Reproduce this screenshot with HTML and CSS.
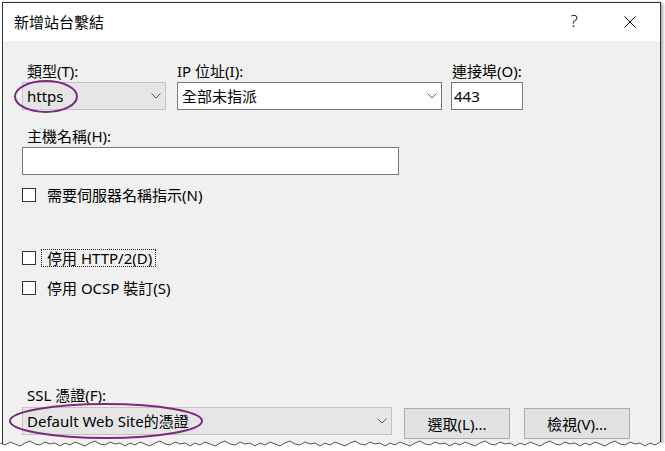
FILE: index.html
```html
<!DOCTYPE html>
<html lang="zh-Hant">
<head>
<meta charset="utf-8">
<title>新增站台繫結</title>
<link rel="stylesheet" href="styles.css">
</head>
<body>
<div class="dialog">
  <div class="titlebar">
    <span class="title">新增站台繫結</span>
    <span class="help">?</span>
    <span class="close">
      <svg width="12" height="12" viewBox="0 0 12 12"><path d="M0.5 0.5 L11.5 11.5 M11.5 0.5 L0.5 11.5" stroke="#000" stroke-width="1" fill="none"/></svg>
    </span>
  </div>
  <div class="content">
    <div class="top-row">
      <div class="group g-type">
        <div class="label indent">類型(T):</div>
        <div class="combo grey"><span class="val">https</span><svg class="chev" width="10" height="6" viewBox="0 0 10 6"><polyline points="0.5,0.5 5,5 9.5,0.5" fill="none" stroke="#606060" stroke-width="1"/></svg></div>
      </div>
      <div class="group g-ip">
        <div class="label">IP 位址(I):</div>
        <div class="combo"><span class="val">全部未指派</span><svg class="chev" width="10" height="6" viewBox="0 0 10 6"><polyline points="0.5,0.5 5,5 9.5,0.5" fill="none" stroke="#606060" stroke-width="1"/></svg></div>
      </div>
      <div class="group g-port">
        <div class="label port-label">連接埠(O):</div>
        <div class="input port">443</div>
      </div>
    </div>
    <div class="label indent host-label">主機名稱(H):</div>
    <div class="input host"></div>
    <div class="check sni"><span class="box"></span><span class="ctext">需要伺服器名稱指示(N)</span></div>
    <div class="check http2"><span class="box"></span><span class="ctext focus">停用 HTTP/2(D)</span></div>
    <div class="check ocsp"><span class="box"></span><span class="ctext">停用 OCSP 裝訂(S)</span></div>
    <div class="label indent ssl-label">SSL 憑證(F):</div>
    <div class="ssl-row">
      <div class="combo grey ssl"><span class="val">Default Web Site的憑證</span><svg class="chev" width="10" height="6" viewBox="0 0 10 6"><polyline points="0.5,0.5 5,5 9.5,0.5" fill="none" stroke="#606060" stroke-width="1"/></svg></div>
      <div class="btn">選取(L)...</div>
      <div class="btn">檢視(V)...</div>
    </div>
  </div>
</div>
<svg class="marks" width="665" height="451" viewBox="0 0 665 451">
  <ellipse cx="46" cy="96.5" rx="31" ry="15.5" fill="none" stroke="#7b2a7f" stroke-width="2"/>
  <ellipse cx="106" cy="421" rx="96" ry="17" fill="none" stroke="#7b2a7f" stroke-width="2"/>
</svg>
<svg class="tear" width="665" height="13" viewBox="0 0 665 13">
  <path d="M0,5 L5,7 L10,4 L15,6 L20,8 L25,5 L30,3 L35,6 L40,7 L45,4 L50,6 L55,5 L60,8 L65,5 L70,7 L75,4 L80,6 L85,8 L90,5 L95,3 L100,6 L105,7 L110,4 L115,6 L120,5 L125,8 L130,5 L135,7 L140,4 L145,6 L150,8 L155,5 L160,3 L165,6 L170,7 L175,4 L180,6 L185,5 L190,8 L195,5 L200,7 L205,4 L210,6 L215,8 L220,5 L225,3 L230,6 L235,7 L240,4 L245,6 L250,5 L255,8 L260,5 L265,7 L270,4 L275,6 L280,8 L285,5 L290,3 L295,6 L300,7 L305,4 L310,6 L315,5 L320,8 L325,5 L330,7 L335,4 L340,6 L345,8 L350,5 L355,3 L360,6 L365,7 L370,4 L375,6 L380,5 L385,8 L390,5 L395,7 L400,4 L405,6 L410,8 L415,5 L420,3 L425,6 L430,7 L435,4 L440,6 L445,5 L450,8 L455,5 L460,7 L465,4 L470,6 L475,8 L480,5 L485,3 L490,6 L495,7 L500,4 L505,6 L510,5 L515,8 L520,5 L525,7 L530,4 L535,6 L540,8 L545,5 L550,3 L555,6 L560,7 L565,4 L570,6 L575,5 L580,8 L585,5 L590,7 L595,4 L600,6 L605,8 L610,5 L615,3 L620,6 L625,7 L630,4 L635,6 L640,5 L645,8 L650,5 L655,7 L660,4 L665,6 L665,13 L0,13 Z" fill="#fff" stroke="none"/>
  <polyline points="0,5 5,7 10,4 15,6 20,8 25,5 30,3 35,6 40,7 45,4 50,6 55,5 60,8 65,5 70,7 75,4 80,6 85,8 90,5 95,3 100,6 105,7 110,4 115,6 120,5 125,8 130,5 135,7 140,4 145,6 150,8 155,5 160,3 165,6 170,7 175,4 180,6 185,5 190,8 195,5 200,7 205,4 210,6 215,8 220,5 225,3 230,6 235,7 240,4 245,6 250,5 255,8 260,5 265,7 270,4 275,6 280,8 285,5 290,3 295,6 300,7 305,4 310,6 315,5 320,8 325,5 330,7 335,4 340,6 345,8 350,5 355,3 360,6 365,7 370,4 375,6 380,5 385,8 390,5 395,7 400,4 405,6 410,8 415,5 420,3 425,6 430,7 435,4 440,6 445,5 450,8 455,5 460,7 465,4 470,6 475,8 480,5 485,3 490,6 495,7 500,4 505,6 510,5 515,8 520,5 525,7 530,4 535,6 540,8 545,5 550,3 555,6 560,7 565,4 570,6 575,5 580,8 585,5 590,7 595,4 600,6 605,8 610,5 615,3 620,6 625,7 630,4 635,6 640,5 645,8 650,5 655,7 660,4" fill="none" stroke="#555" stroke-width="1"/>
</svg>
</body>
</html>
```
FILE: styles.css
```css
* { box-sizing: border-box; }

html, body {
  margin: 0;
  padding: 0;
  background: #fff;
}

body {
  width: 665px;
  height: 451px;
  overflow: hidden;
  position: relative;
  font-family: "Noto Sans", "Noto Sans CJK TC", sans-serif;
  font-size: 15px;
  color: #000;
}

.dialog {
  margin: 2px 0 0 2px;
  width: 659px;
  height: 449px;
  border: 1px solid #333;
  border-bottom: none;
  box-shadow: 2px 1px 3px rgba(0, 0, 0, 0.35);
  display: flex;
  flex-direction: column;
  background: #f0f0f0;
}

.titlebar {
  height: 38px;
  flex: none;
  background: #fff;
  display: flex;
  align-items: center;
  padding: 0 7px 0 11px;
}

.title {
  font-size: 15px;
  line-height: 20px;
}

.help {
  margin-left: auto;
  width: 46px;
  text-align: center;
  font-size: 17px;
  font-weight: 300;
  line-height: 20px;
  margin-top: -2px;
}

.close {
  width: 46px;
  height: 20px;
  display: flex;
  align-items: center;
  justify-content: center;
  margin-left: 10px;
}

.content {
  flex: 1;
  padding: 20px 0 0 19px;
}

.label {
  height: 20px;
  line-height: 20px;
  white-space: nowrap;
}

.label.indent { padding-left: 5px; }
.port-label { padding-left: 1px; }

.top-row {
  display: flex;
  align-items: flex-start;
}

.group { display: flex; flex-direction: column; gap: 1px; }
.g-type { width: 144px; }
.g-ip { width: 265px; margin-left: 11px; }
.g-port { width: 72px; margin-left: 9px; }

.combo {
  height: 28px;
  border: 1px solid #7a7a7a;
  background: #fff;
  display: flex;
  align-items: center;
  padding: 0 4px 0 4px;
}

.combo.grey {
  background: #e5e5e5;
  border-color: #c4c4c4;
}

.combo .val {
  flex: 1;
  white-space: nowrap;
  line-height: 20px;
}

.chev { flex: none; }

.input {
  height: 28px;
  border: 1px solid #7a7a7a;
  background: #fff;
  line-height: 26px;
  padding-left: 2px;
}

.host-label { margin-top: 16px; }
.host { width: 377px; margin-top: 1px; }

.check {
  display: flex;
  align-items: center;
  height: 20px;
}

.check .box {
  width: 14px;
  height: 14px;
  border: 1px solid #333;
  background: #fff;
  margin-right: 5px;
  margin-top: -1px;
}

.ctext {
  border: 1px solid transparent;
  padding: 0 3px 0 5px;
  line-height: 16px;
  white-space: nowrap;
}

.ctext.focus { border: 1px dotted #222; }

.sni { margin-top: 10px; }
.http2 { margin-top: 43px; }
.ocsp { margin-top: 10px; }

.ssl-label { margin-top: 87px; }

.ssl-row {
  display: flex;
  align-items: flex-start;
  margin-top: 2px;
}

.ssl { width: 370px; }

.btn {
  width: 106px;
  height: 31px;
  margin-top: 1px;
  margin-left: 12px;
  border: 1px solid #adadad;
  background: #e1e1e1;
  display: flex;
  align-items: center;
  justify-content: center;
  line-height: 20px;
  white-space: nowrap;
}

.btn + .btn { margin-left: 14px; }

.marks {
  position: absolute;
  left: 0;
  top: 0;
  pointer-events: none;
}

.tear {
  position: absolute;
  left: 0;
  top: 438px;
}
```
